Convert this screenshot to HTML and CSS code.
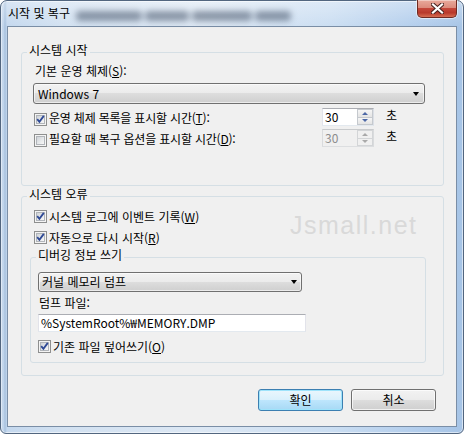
FILE: index.html
```html
<!DOCTYPE html>
<html lang="ko">
<head>
<meta charset="utf-8">
<title>시작 및 복구</title>
<link rel="stylesheet" href="styles.css">
</head>
<body>
<div class="window">
  <div class="titlebar">
    <div class="title">시작 및 복구</div>
    <div class="ghost" aria-hidden="true"><i class="g1w"></i><i class="g2w"></i><i class="g3w"></i><i class="g4w"></i></div>
    <div class="close">
      <svg width="13" height="11" viewBox="0 0 13 11"><path d="M2 1.5 L11 9.5 M11 1.5 L2 9.5" stroke="#4a2320" stroke-width="4.2" stroke-linecap="square"/><path d="M2 1.5 L11 9.5 M11 1.5 L2 9.5" stroke="#ffffff" stroke-width="2.2" stroke-linecap="square"/></svg>
    </div>
  </div>
  <div class="client">
    <fieldset class="group g-start">
      <legend>시스템 시작</legend>
      <div class="gbody">
        <div class="lbl">기본 운영 체제(<u>S</u>):</div>
        <div class="combo combo-os"><span class="ctext">Windows 7</span><i class="arrow"></i></div>
        <div class="srow">
          <span class="cb"><span class="box"><svg width="9" height="9" viewBox="0 0 9 9"><path d="M1.2 4.2 L3.4 6.8 L7.8 0.9" fill="none" stroke="#2e4995" stroke-width="1.8"/></svg></span></span>
          <span class="slbl">운영 체제 목록을 표시할 시간(<u>T</u>):</span>
          <div class="spin"><span class="val">30</span><span class="btns"><span><i class="up"></i></span><span><i class="down"></i></span></span></div>
          <span class="unit">초</span>
        </div>
        <div class="srow second">
          <span class="cb"><span class="box"></span></span>
          <span class="slbl">필요할 때 복구 옵션을 표시할 시간(<u>D</u>):</span>
          <div class="spin dis"><span class="val">30</span><span class="btns"><span><i class="up"></i></span><span><i class="down"></i></span></span></div>
          <span class="unit">초</span>
        </div>
      </div>
    </fieldset>

    <fieldset class="group g-err">
      <legend>시스템 오류</legend>
      <div class="gbody">
        <div class="crow">
          <span class="cb"><span class="box"><svg width="9" height="9" viewBox="0 0 9 9"><path d="M1.2 4.2 L3.4 6.8 L7.8 0.9" fill="none" stroke="#2e4995" stroke-width="1.8"/></svg></span></span>
          <span class="clbl">시스템 로그에 이벤트 기록(<u>W</u>)</span>
        </div>
        <div class="crow second">
          <span class="cb"><span class="box"><svg width="9" height="9" viewBox="0 0 9 9"><path d="M1.2 4.2 L3.4 6.8 L7.8 0.9" fill="none" stroke="#2e4995" stroke-width="1.8"/></svg></span></span>
          <span class="clbl">자동으로 다시 시작(<u>R</u>)</span>
        </div>
        <div class="watermark">Jsmall.net</div>
        <fieldset class="group g-debug">
          <legend>디버깅 정보 쓰기</legend>
          <div class="gbody">
            <div class="combo combo-dump"><span class="ctext">커널 메모리 덤프</span><i class="arrow"></i></div>
            <div class="lbl2">덤프 파일:</div>
            <div class="edit">%SystemRoot%₩MEMORY.DMP</div>
            <div class="crow">
              <span class="cb"><span class="box"><svg width="9" height="9" viewBox="0 0 9 9"><path d="M1.2 4.2 L3.4 6.8 L7.8 0.9" fill="none" stroke="#2e4995" stroke-width="1.8"/></svg></span></span>
              <span class="clbl">기존 파일 덮어쓰기(<u>O</u>)</span>
            </div>
          </div>
        </fieldset>
      </div>
    </fieldset>

    <div class="buttons">
      <div class="btn default">확인</div>
      <div class="btn">취소</div>
    </div>
  </div>
</div>
</body>
</html>
```

FILE: styles.css
```css
* { box-sizing: border-box; }
html, body { margin: 0; padding: 0; }
body {
  width: 464px;
  height: 434px;
  overflow: hidden;
  background: #ffffff;
  font-family: "Noto Sans CJK KR", "Liberation Sans", sans-serif;
  font-size: 12px;
  line-height: 14px;
  color: #000;
}
u { text-underline-offset: 1px; }

.window {
  width: 464px;
  height: 434px;
  border: 1px solid #52667f;
  border-radius: 7px 7px 6px 6px;
  padding: 0 6px 6px;
  display: flex;
  flex-direction: column;
  background:
    linear-gradient(to bottom, rgba(255,255,255,0.35) 0, rgba(255,255,255,0) 26px),
    linear-gradient(to right, #b3cbe6 0px, #c9dbef 2px, #a7c1de 4px, #c4d8ee 6px, #d2e1f1 60px, #dde8f4 200px, #cbdef2 330px, #b2cdec 420px, #a6c4e6 464px);
  box-shadow: inset 0 0 0 1px rgba(255,255,255,0.55);
}

.titlebar {
  height: 25px;
  display: flex;
  align-items: flex-start;
}
.title {
  padding: 5px 0 0 1px;
  white-space: nowrap;
}
.ghost {
  display: flex;
  gap: 3px;
  margin: 10px 0 0 6px;
  filter: blur(3px);
  opacity: 0.5;
}
.ghost i { display: block; height: 10px; background: #34435a; border-radius: 4px; }
.ghost .g1w { width: 66px; }
.ghost .g2w { width: 44px; }
.ghost .g3w { width: 60px; }
.ghost .g4w { width: 36px; }

.close {
  margin-left: auto;
  margin-top: -1px;
  width: 40px;
  height: 18px;
  border: 1px solid #6e2a22;
  border-top: none;
  border-radius: 0 0 5px 5px;
  background: linear-gradient(to bottom, #e9aa9c 0%, #dc8b7c 45%, #c4473a 50%, #b8392b 75%, #d66d52 100%);
  box-shadow: 0 0 0 1px rgba(255,255,255,0.5), inset 0 1px 0 rgba(255,255,255,0.4);
  display: flex;
  align-items: center;
  justify-content: center;
}

.client {
  flex: 1;
  border: 1px solid #7a8ea6;
  background: #f0f0f0;
  padding: 15px 12px 0 13px;
  display: flex;
  flex-direction: column;
}

fieldset.group {
  margin: 0;
  padding: 0;
  min-width: 0;
  border: 1px solid #d5dfe5;
  border-radius: 3px;
}
fieldset.group > legend {
  margin-left: 5px;
  padding: 0 2px 6px;
  line-height: 15px;
}

/* group 1 */
.g-start .gbody { padding: 1px 18px 38px 11px; }
.lbl { margin-left: 2px; }

.combo {
  display: flex;
  align-items: center;
  border: 1px solid #707070;
  border-radius: 3px;
  background: linear-gradient(to bottom, #f2f2f2 0%, #ebebeb 50%, #dddddd 50%, #cfcfcf 100%);
  box-shadow: inset 0 0 0 1px rgba(255,255,255,0.6);
}
.combo .ctext { padding-left: 4px; flex: 1; white-space: nowrap; }
.combo .arrow {
  width: 0; height: 0;
  border-left: 3.5px solid transparent;
  border-right: 3.5px solid transparent;
  border-top: 4px solid #000;
  margin-right: 5px;
}
.combo-os { margin-top: 5px; height: 21px; }

.srow { display: flex; align-items: flex-start; height: 18px; margin-top: 4px; }
.srow.second { margin-top: 3px; }
.srow .cb { margin: 5px 0 0 1px; }
.slbl { width: 273px; margin: 3px 0 0 2px; white-space: nowrap; letter-spacing: -0.2px; }
.unit { margin-left: 12px; }

.cb {
  display: flex;
  width: 13px;
  height: 13px;
  flex: none;
  border: 1px solid #8e8f8f;
  background: #f4f4f4;
  padding: 1px;
}
.cb .box {
  display: block;
  width: 9px;
  height: 9px;
  border: 1px solid #b1b5ba;
  background: linear-gradient(135deg, #cfd3d8 0%, #e6e8ea 55%, #f7f7f7 100%);
  position: relative;
}
.cb .box svg { position: absolute; left: -1px; top: -1px; overflow: visible; }

.spin {
  display: flex;
  width: 52px;
  height: 18px;
  border: 1px solid;
  border-color: #abadb3 #dbdfe6 #e3e9ef #e2e3ea;
  background: #fff;
}
.spin .val { flex: 1; padding-left: 2px; line-height: 16px; }
.spin .btns { width: 16px; display: flex; flex-direction: column; }
.spin .btns span {
  flex: 1;
  display: flex;
  align-items: center;
  justify-content: center;
  border: 1px solid #c5c9ce;
  background: linear-gradient(to bottom, #f6f6f6, #e4e4e4);
}
.spin .btns span + span { border-top: none; }
.up, .down { width: 0; height: 0; border-left: 3px solid transparent; border-right: 3px solid transparent; }
.up { border-bottom: 3px solid #4d68a6; }
.down { border-top: 3px solid #4d68a6; }
.spin.dis { background: #f0f0f0; border-color: #c8cacc #d9dbdd #dcdee0 #d9dbdd; }
.spin.dis .val { color: #8d8d8d; }
.spin.dis .btns span { background: #f0f0f0; border-color: #d3d5d7; }
.spin.dis .up { border-bottom-color: #a9a9a9; }
.spin.dis .down { border-top-color: #a9a9a9; }

/* group 2 */
.g-err { margin-top: 5px; }
.g-err > .gbody { padding: 0 17px 12px 8px; position: relative; }
.crow { display: flex; align-items: center; height: 19px; margin-left: 4px; }
.crow.second { margin-top: 2px; }
.clbl { margin-left: 2px; white-space: nowrap; }

.watermark {
  position: absolute;
  left: 268px;
  top: 4px;
  font-family: "Liberation Sans", sans-serif;
  font-size: 25px;
  line-height: 28px;
  letter-spacing: 1.5px;
  color: #d9d9d9;
}

.g-debug { margin-top: 2px; }
.g-debug > legend { margin-left: 2px; }
.g-debug > .gbody { padding: 0 6px 6px 7px; }
.combo-dump { margin-top: 4px; height: 20px; width: 264px; }
.combo-dump .ctext { padding-left: 3px; }
.combo-dump .arrow { margin-right: 4px; }
.lbl2 { margin: 4px 0 0 1px; }
.edit {
  margin-top: 4px;
  width: 268px;
  height: 18px;
  border: 1px solid;
  border-color: #abadb3 #e2e3ea #e3e9ef #e2e3ea;
  background: #fff;
  padding-left: 2px;
  line-height: 16px;
  white-space: nowrap;
}
.g-debug .crow { margin: 5px 0 0 0; }

.buttons {
  display: flex;
  justify-content: flex-end;
  gap: 8px;
  margin: 13px 8px 0 0;
}
.btn {
  width: 85px;
  height: 22px;
  border: 1px solid #707070;
  border-radius: 3px;
  background: linear-gradient(to bottom, #f2f2f2 0%, #ebebeb 50%, #dddddd 50%, #cfcfcf 100%);
  box-shadow: inset 0 0 0 1px rgba(255,255,255,0.7);
  display: flex;
  align-items: center;
  justify-content: center;
}
.btn.default {
  border-color: #3c7fb1;
  background: linear-gradient(to bottom, #eaf6fd 0%, #d9f0fc 50%, #bee6fd 50%, #a7d9f5 100%);
  box-shadow: inset 0 0 0 1px #9ee3fb;
}
```
